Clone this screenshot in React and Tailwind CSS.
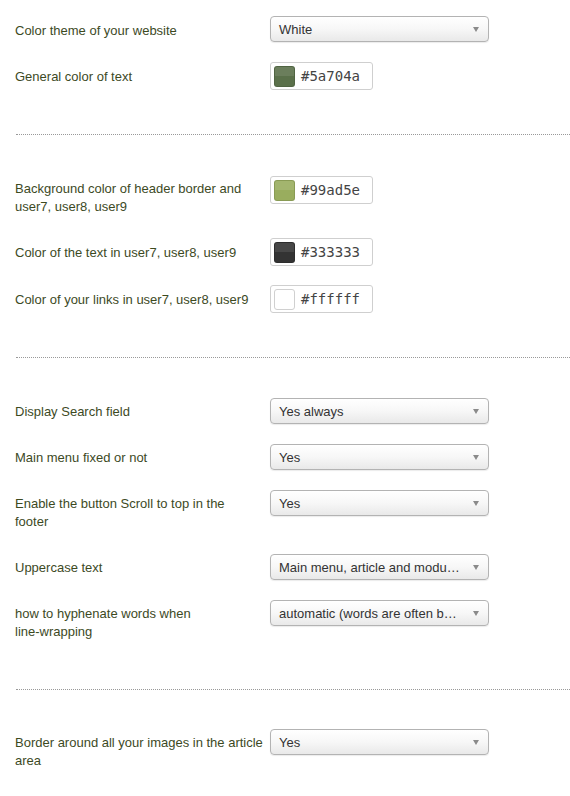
import React from "react";

const labelCls =
  "w-[255px] shrink-0 whitespace-nowrap text-[13px] leading-[18px] text-[#3d4a1f]";

function Select({ value }) {
  return (
    <div className="relative w-[219px] h-[26px] rounded-[4px] border border-[#b3b3b3] bg-gradient-to-b from-white via-[#f7f7f7] to-[#e9e9e9] shadow-[0_1px_1px_rgba(0,0,0,0.08)] flex items-center">
      <span className="pl-[8px] pr-[27px] truncate text-[13px] text-[#333] pt-px">
        {value}
      </span>
      <span className="absolute right-[9px] top-[10px] w-0 h-0 border-l-[3.5px] border-r-[3.5px] border-t-[5px] border-l-transparent border-r-transparent border-t-[#8a8a8a]" />
    </div>
  );
}

function ColorInput({ color, text, light }) {
  return (
    <div className="w-[103px] h-[28px] rounded-[3px] border border-[#cfcfcf] bg-white flex items-center">
      <div
        className={
          "relative ml-[3px] w-[21px] h-[21px] rounded-[3px] overflow-hidden border " +
          (light ? "border-[#d0d0d0]" : "border-black/10")
        }
        style={{ backgroundColor: color }}
      >
        {!light && <div className="absolute left-0 right-0 top-0 h-1/2 bg-white/10" />}
      </div>
      <span className="ml-[6px] text-[14px] text-[#444] font-['DejaVu_Sans_Mono',monospace]">
        {text}
      </span>
    </div>
  );
}

function Row({ label, h, pt, children }) {
  return (
    <div className="flex items-start" style={{ height: h }}>
      <div className={labelCls} style={{ paddingTop: pt }}>
        {label}
      </div>
      {children}
    </div>
  );
}

function Sep({ h }) {
  return (
    <div style={{ height: h }}>
      <div className="border-t border-dotted border-[#999] ml-px" />
    </div>
  );
}

export default function App() {
  return (
    <div className="w-[570px] h-[796px] bg-white pl-[15px] pt-[16px] font-['Liberation_Sans',Arial,sans-serif] overflow-hidden">
      <Row label="Color theme of your website" h={46} pt={6}>
        <Select value="White" />
      </Row>
      <Row label="General color of text" h={72} pt={6}>
        <ColorInput color="#5a704a" text="#5a704a" />
      </Row>
      <Sep h={42} />
      <Row
        label={<>Background color of header border and<br />user7, user8, user9</>}
        h={62}
        pt={4}
      >
        <ColorInput color="#99ad5e" text="#99ad5e" />
      </Row>
      <Row label="Color of the text in user7, user8, user9" h={47} pt={6}>
        <ColorInput color="#333333" text="#333333" />
      </Row>
      <Row label="Color of your links in user7, user8, user9" h={72} pt={6}>
        <ColorInput color="#ffffff" text="#ffffff" light />
      </Row>
      <Sep h={41} />
      <Row label="Display Search field" h={46} pt={5}>
        <Select value="Yes always" />
      </Row>
      <Row label="Main menu fixed or not" h={46} pt={5}>
        <Select value="Yes" />
      </Row>
      <Row
        label={<>Enable the button Scroll to top in the<br />footer</>}
        h={64}
        pt={5}
      >
        <Select value="Yes" />
      </Row>
      <Row label="Uppercase text" h={46} pt={5}>
        <Select value="Main menu, article and module titles" />
      </Row>
      <Row
        label={<>how to hyphenate words when<br />line-wrapping</>}
        h={89}
        pt={5}
      >
        <Select value="automatic (words are often broken)" />
      </Row>
      <Sep h={40} />
      <Row
        label={<>Border around all your images in the article<br />area</>}
        h={60}
        pt={5}
      >
        <Select value="Yes" />
      </Row>
    </div>
  );
}
